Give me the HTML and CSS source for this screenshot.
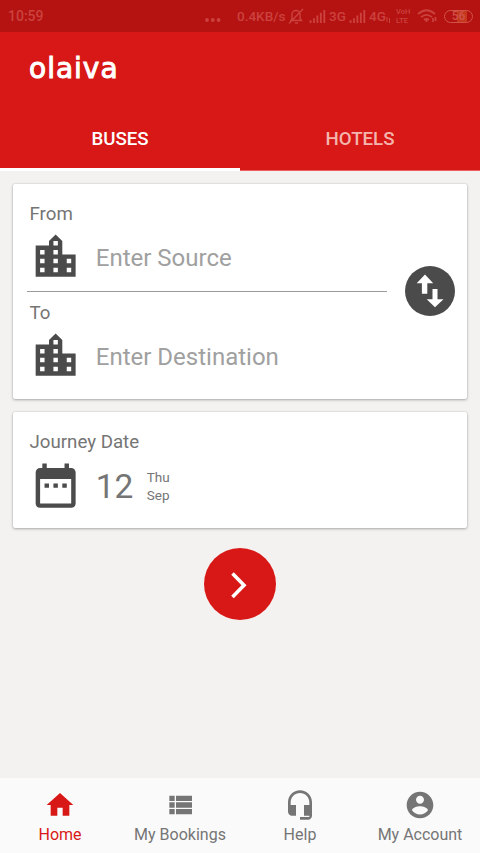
FILE: index.html
```html
<!DOCTYPE html>
<html lang="en">
<head>
<meta charset="utf-8">
<title>olaiva</title>
<link rel="stylesheet" href="styles.css">
</head>
<body>
<svg class="defs" aria-hidden="true">
  <symbol id="city" viewBox="0 0 24 24"><path d="M15 11V5l-3-3-3 3v2H3v14h18V11h-6zm-8 8H5v-2h2v2zm0-4H5v-2h2v2zm0-4H5V9h2v2zm6 8h-2v-2h2v2zm0-4h-2v-2h2v2zm0-4h-2V9h2v2zm0-4h-2V5h2v2zm6 12h-2v-2h2v2zm0-4h-2v-2h2v2z"/></symbol>
  <symbol id="signal" viewBox="0 0 17 14"><path d="M0 11h2v3H0zM3.7 9h2v5h-2zM7.4 6h2v8h-2zM11.100 3h2v11h-2zM14.800 0h2v14h-2z"/></symbol>
</svg>
<div class="status">
  <span class="clock">10:59</span>
  <svg class="dots" viewBox="0 0 16 4"><circle cx="2" cy="2" r="1.900"/><circle cx="7.800" cy="2" r="1.900"/><circle cx="13.600" cy="2" r="1.900"/></svg>
  <span class="speed">0.4KB/s</span>
  <svg class="bell" viewBox="0 0 16 16"><path d="M3 12.500h10.500l-1.500-2V6.500a4 4 0 0 0-8 0v4zM7 15h3M1 15.500L15 1"/></svg>
  <svg class="signal one"><use href="#signal"/></svg>
  <span class="net">3G</span>
  <svg class="signal two"><use href="#signal"/></svg>
  <span class="net">4G</span>
  <svg class="data" viewBox="0 0 5 6"><path d="M1 0v5M3.500 1v5"/></svg>
  <span class="volte"><span>VoH</span><span>LTE</span></span>
  <svg class="wifi" viewBox="0 0 20 14"><path d="M1 5Q9.500-2.500 18 5M4 8.200q5.500-4.800 11 0M7 11q2.500-2 5 0"/><path d="M9.500 11v2M16 9v4M18.500 8v4"/></svg>
  <span class="battery">56</span>
</div>
<header class="header">
  <div class="brand">olaiva</div>
  <nav class="tabs">
    <div class="tab active">BUSES</div>
    <div class="tab">HOTELS</div>
  </nav>
</header>
<main class="main">
  <section class="card route">
    <div class="places">
      <div class="place source">
        <div class="label">From</div>
        <div class="row"><svg class="icon"><use href="#city"/></svg><span class="hint">Enter Source</span></div>
      </div>
      <div class="place">
        <div class="label">To</div>
        <div class="row"><svg class="icon"><use href="#city"/></svg><span class="hint">Enter Destination</span></div>
      </div>
    </div>
    <div class="swap">
      <svg viewBox="0 0 50 50"><path d="M20 8.500l-8.300 8.800h5.200v10.500h5.400V17.300h5.900zM27.500 23h5v10.200h6L30 41.300l-8.300-8.100h5.800z"/></svg>
    </div>
  </section>
  <section class="card date">
    <div class="label">Journey Date</div>
    <div class="row">
      <svg class="icon" viewBox="0 0 24 24"><path d="M9 11H7v2h2v-2zm4 0h-2v2h2v-2zm4 0h-2v2h2v-2zm2-7h-1V2h-2v2H8V2H6v2H5c-1.110 0-1.990.9-1.990 2L3 20c0 1.100.89 2 2 2h14c1.100 0 2-.9 2-2V6c0-1.100-.9-2-2-2zm0 16H5V9h14v11z"/></svg>
      <span class="day">12</span>
      <span class="when"><span>Thu</span><span>Sep</span></span>
    </div>
  </section>
  <div class="go"><svg viewBox="0 0 72 72"><path d="M28.500 25.500L40 37.200 28.500 49"/></svg></div>
</main>
<nav class="bottom">
  <div class="item active"><svg viewBox="0 0 24 24"><path d="M10 20v-6h4v6h5v-8h3L12 3 2 12h3v8z"/></svg><span>Home</span></div>
  <div class="item"><svg viewBox="0 0 24 24"><path d="M4 14h4v-4H4v4zm0 5h4v-4H4v4zM4 9h4V5H4v4zm5 5h12v-4H9v4zm0 5h12v-4H9v4zM9 5v4h12V5H9z"/></svg><span>My Bookings</span></div>
  <div class="item"><svg viewBox="0 0 24 24"><path d="M12 1c-4.970 0-9 4.030-9 9v7c0 1.660 1.340 3 3 3h3v-8H5v-2c0-3.870 3.130-7 7-7s7 3.130 7 7v2h-4v8h4v1h-7v2h6c1.660 0 3-1.340 3-3V10c0-4.970-4.030-9-9-9z"/></svg><span>Help</span></div>
  <div class="item"><svg viewBox="0 0 24 24"><path d="M12 2C6.480 2 2 6.480 2 12s4.480 10 10 10 10-4.480 10-10S17.520 2 12 2zm0 3c1.660 0 3 1.340 3 3s-1.340 3-3 3-3-1.340-3-3 1.340-3 3-3zm0 14.200c-2.500 0-4.710-1.280-6-3.220.03-1.990 4-3.080 6-3.080 1.990 0 5.970 1.090 6 3.080-1.290 1.940-3.500 3.220-6 3.220z"/></svg><span>My Account</span></div>
</nav>
</body>
</html>
```
FILE: styles.css
```css
* { box-sizing: border-box; }
body {
  margin: 0;
  height: 853px;
  display: flex;
  flex-direction: column;
  overflow: hidden;
  background: #f3f2f1;
  color: #757575;
  font-family: Roboto, "Liberation Sans", sans-serif;
}
svg { display: block; flex: none; fill: currentColor; }
.defs { width: 0; height: 0; position: absolute; }

.status {
  flex: none;
  height: 32px;
  display: flex;
  align-items: center;
  padding: 0 7px 0 8px;
  background: #b51311;
  color: #cb423f;
  font-size: 14px;
  font-weight: 500;
  line-height: 16px;
  white-space: nowrap;
}
.clock { width: 197px; }
.dots { width: 16px; height: 4px; margin-top: 8px; }
.speed { width: 49px; margin-left: 16px; font-size: 13.5px; }
.bell { width: 16px; height: 16px; margin-left: 2px; fill: none; stroke: currentColor; stroke-width: 1.4; }
.signal { width: 17px; height: 13px; }
.one { margin: 0 3px 0 5px; }
.two { margin: 0 3px 0 3px; }
.net { width: 17px; font-size: 13.5px; }
.data { width: 5px; height: 6px; margin-top: 8px; fill: none; stroke: currentColor; }
.volte {
  width: 15px;
  margin-left: 5px;
  display: flex;
  flex-direction: column;
  font-size: 7.5px;
  line-height: 9px;
}
.wifi { width: 20px; height: 14px; margin-left: 6px; fill: none; stroke: currentColor; stroke-width: 1.7; }
.battery {
  width: 29px;
  height: 13px;
  margin-left: auto;
  border: 1.5px solid currentColor;
  border-radius: 7px;
  background: linear-gradient(90deg, #b51311 45%, #c4381b 46%, #c4381b 82%, #b51311 83%);
  color: #d2524a;
  font-size: 12px;
  line-height: 10px;
  text-align: center;
}

.header { flex: none; height: 139px; background: #d81816; color: #fff; }
.brand {
  height: 76px;
  padding: 21px 0 0 29px;
  font-family: "DejaVu Sans", sans-serif;
  font-size: 28px;
  letter-spacing: 1px;
  line-height: 32px;
  -webkit-text-stroke: 1px currentColor;
}
.tabs { display: flex; height: 63px; }
.tab {
  flex: 1;
  padding-top: 20px;
  border-bottom: 1px solid #e8615e;
  color: #f3b5ad;
  font-size: 18.7px;
  font-weight: 500;
  line-height: 22px;
  text-align: center;
}
.tab.active { border-bottom: 3px solid #fff; color: #fff; }

.main { flex: 1; padding: 12.5px 13px 0; }
.card {
  border-radius: 2px;
  background: #fff;
  box-shadow: 0 1px 3px rgba(0, 0, 0, .28), 0 0 2px rgba(0, 0, 0, .14);
}
.route { display: flex; height: 215.500px; }
.places { width: 374px; padding-left: 14px; }
.place { height: 99px; padding: 9.500px 0 0 2px; }
.source { height: 108.500px; padding-top: 19px; border-bottom: 1.500px solid #9b9b9b; }
.label { margin-left: 0.500px; font-size: 18.7px; line-height: 22px; }
.row { display: flex; align-items: center; height: 53px; margin-top: 6px; }
.icon { width: 53.3px; height: 53.3px; color: #4b4b4b; }
.hint { margin: 2px 0 0 13.500px; color: #a0a0a0; font-size: 24px; line-height: 28px; }
.swap {
  width: 50px;
  height: 50px;
  margin: 82.500px 0 0 18px;
  border-radius: 50%;
  background: #4b4b4b;
  color: #fff;
}
.date { height: 116px; margin-top: 13px; padding: 19px 0 0 16px; }
.day { width: 37px; margin: 2px 0 0 13.500px; font-size: 33.500px; line-height: 40px; }
.when { display: flex; flex-direction: column; margin: 0 0 0 14px; font-size: 13.500px; line-height: 18px; }
.go { width: 72px; height: 72px; margin: 20px auto 0; border-radius: 50%; background: #d81816; color: #fff; }
.go svg { fill: none; stroke: currentColor; stroke-width: 3.600; }

.bottom { flex: none; height: 75px; display: flex; background: #fafafa; }
.item { flex: 1; display: flex; flex-direction: column; align-items: center; padding-top: 11px; font-size: 16px; line-height: 20px; }
.item svg { width: 32px; height: 32px; margin-bottom: 4px; }
.item.active { color: #d81816; }
```
